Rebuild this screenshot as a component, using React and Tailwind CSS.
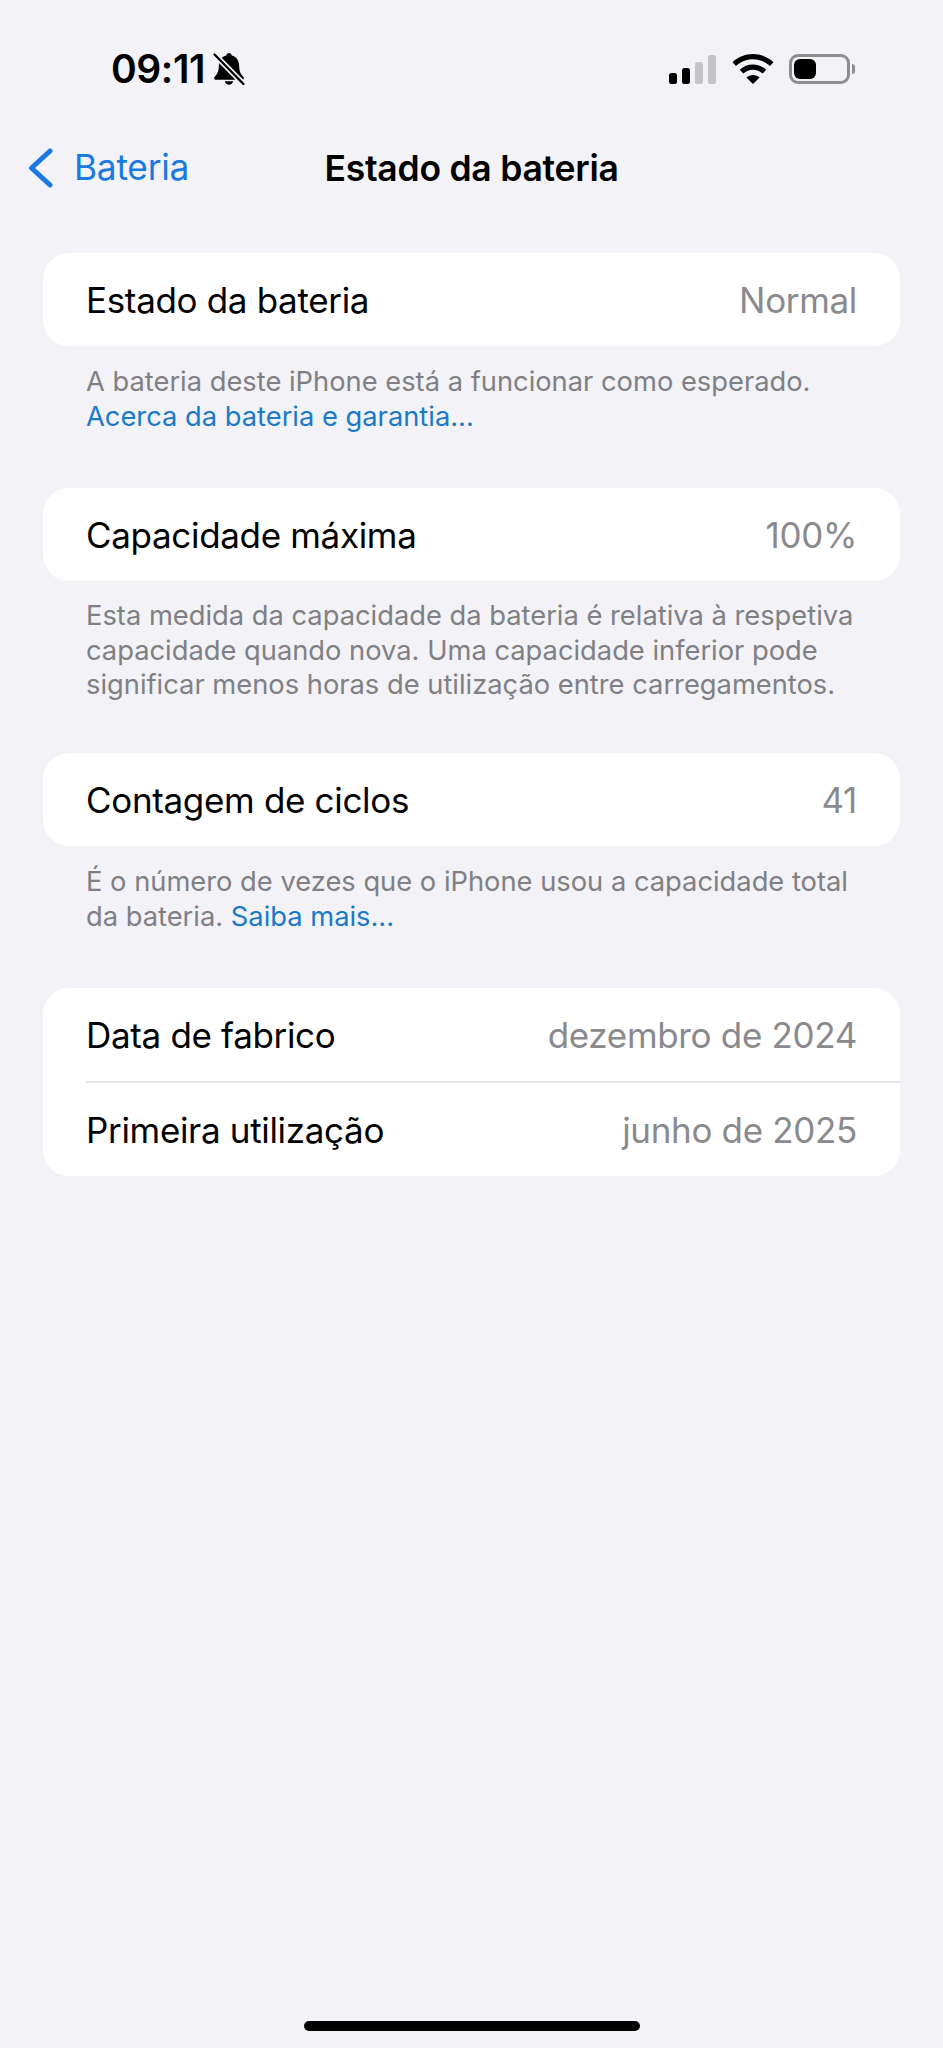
const font = { fontFamily: 'Inter, sans-serif' }

const Row = ({ label, value }) => (
  <div className="flex items-center justify-between h-[93px] pt-[1px] px-[43px]">
    <span className="text-[35px] tracking-[-0.33px] text-black">{label}</span>
    <span className="text-[35px] tracking-[-0.33px] text-[#8a8a8e]">{value}</span>
  </div>
)

const Card = ({ children }) => (
  <div className="bg-white rounded-[26px] mx-[43px] overflow-hidden">{children}</div>
)

const Note = ({ children, spacing }) => (
  <p className={`px-[86px] text-[27.3px] leading-[34.6px] text-[#808084] ${spacing}`}>{children}</p>
)

const BellSlash = () => (
  <svg width="32" height="32" viewBox="0 0 31 31" className="ml-[8px]">
    <path d="M15.500 0c1.500 0 2.500 1 2.600 2.400 4.600 1.100 7 4.800 7.200 9.600.2 6 1.400 8 3.700 10.600.6.700.9 1.300.9 1.900 0 .9-.7 1.500-1.700 1.500H2.800c-1 0-1.700-.6-1.700-1.500 0-.6.300-1.200.9-1.900C4.300 20 5.500 18 5.700 12c.2-4.800 2.600-8.500 7.200-9.600C13 1 14 0 15.500 0z" fill="#000" />
    <path d="M11.500 27.400h8c-.4 2-2 3.400-4 3.400s-3.600-1.400-4-3.400z" fill="#000" />
    <path d="M1.500 1.500 29.500 30" stroke="#f2f2f7" strokeWidth="5.500" />
    <path d="M1.500 1.500 29.500 30" stroke="#000" strokeWidth="2.200" strokeLinecap="round" />
  </svg>
)

const Signal = () => (
  <div className="flex items-end gap-[5px] h-[30px]">
    <div className="w-[8px] h-[11px] rounded-[2.5px] bg-black" />
    <div className="w-[8px] h-[16px] rounded-[2.5px] bg-black" />
    <div className="w-[8px] h-[22px] rounded-[2.5px] bg-[#c4c4c6]" />
    <div className="w-[8px] h-[29px] rounded-[2.5px] bg-[#c4c4c6]" />
  </div>
)

const Wifi = () => (
  <svg width="42" height="30" viewBox="0 0 42 30">
    <path d="M21 0c7.800 0 15 3 20.500 8.200L38 12C33.400 7.700 27.400 5.200 21 5.200S8.600 7.700 4 12L.5 8.200C6 3 13.200 0 21 0z" fill="#000" />
    <path d="M21 10.500c5 0 9.600 1.900 13.200 5.200l-3.500 3.800C28 17 24.600 15.700 21 15.700s-7 1.300-9.700 3.800l-3.500-3.800C11.400 12.400 16 10.500 21 10.500z" fill="#000" />
    <path d="M21 21c2.500 0 4.800.9 6.600 2.500L21 30l-6.600-6.500C16.200 21.900 18.500 21 21 21z" fill="#000" />
  </svg>
)

const Battery = () => (
  <div className="flex items-center gap-[2px]">
    <div className="w-[61px] h-[30px] rounded-[9px] border-[3px] border-[#8e8e92] p-[2px]">
      <div className="w-[22px] h-full rounded-[6px] bg-black" />
    </div>
    <div className="w-[3px] h-[10px] rounded-r-[3px] bg-[#8e8e92]" />
  </div>
)

const BackChevron = () => (
  <svg width="25" height="40" viewBox="0 0 25 40" fill="none">
    <path d="M22 3 3.500 20 22 37" stroke="#1a7ae2" strokeWidth="5" strokeLinecap="round" strokeLinejoin="round" />
  </svg>
)

export default function App() {
  return (
    <div style={font} className="relative w-[943px] h-[2048px] bg-[#f2f2f7] overflow-hidden">

      {/* status bar */}
      <div className="flex items-center justify-between h-[70px] mt-[34px] pl-[111px] pr-[88px]">
        <div className="flex items-center">
          <span className="text-[39px] font-semibold tracking-[-0.4px] text-black">09:11</span>
          <BellSlash />
        </div>
        <div className="flex items-center gap-[15px]">
          <div className="flex items-center gap-[16px]">
            <Signal />
            <Wifi />
          </div>
          <Battery />
        </div>
      </div>

      {/* nav bar */}
      <div className="relative flex items-center justify-center h-[60px] mt-[35px] mb-[54px]">
        <div className="absolute left-[28px] top-[3px] flex items-center gap-[21px] text-[#1a7ae2]">
          <BackChevron />
          <span className="text-[35.3px] tracking-[-0.25px]">Bateria</span>
        </div>
        <span className="text-[35.5px] font-semibold tracking-[-0.25px] text-black">Estado da bateria</span>
      </div>

      <Card><Row label="Estado da bateria" value="Normal" /></Card>
      <Note spacing="pt-[19px] mb-[54px]">
        A bateria deste iPhone está a funcionar como esperado.<br />
        <span className="text-[#1a7ac8]">Acerca da bateria e garantia...</span>
      </Note>

      <Card><Row label="Capacidade máxima" value="100%" /></Card>
      <Note spacing="pt-[18px] mb-[50px]">
        Esta medida da capacidade da bateria é relativa à respetiva<br />
        capacidade quando nova. Uma capacidade inferior pode<br />
        significar menos horas de utilização entre carregamentos.
      </Note>

      <Card><Row label="Contagem de ciclos" value="41" /></Card>
      <Note spacing="pt-[19px] mb-[54px]">
        É o número de vezes que o iPhone usou a capacidade total<br />
        da bateria. <span className="text-[#1a7ac8]">Saiba mais...</span>
      </Note>

      <Card>
        <Row label="Data de fabrico" value="dezembro de 2024" />
        <div className="ml-[43px] h-[2px] bg-[#e4e4e6]" />
        <Row label="Primeira utilização" value="junho de 2025" />
      </Card>

      {/* home indicator */}
      <div className="absolute bottom-[17px] left-[304px] w-[336px] h-[10px] rounded-full bg-black" />
    </div>
  )
}
